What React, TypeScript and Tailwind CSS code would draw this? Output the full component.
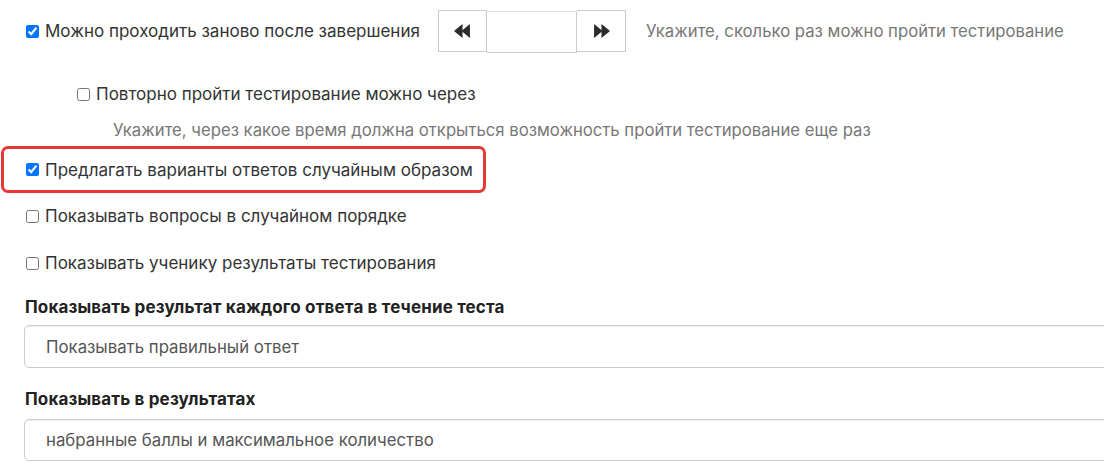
import React from "react";

function Check({ checked = false }: { checked?: boolean }) {
  return (
    <input
      type="checkbox"
      defaultChecked={checked}
      className="w-[13px] h-[13px] m-0 shrink-0"
    />
  );
}

function Backward() {
  return (
    <svg width="17" height="14" viewBox="0 0 16 13" fill="#2b2b2b">
      <path d="M0 6.5 L8 0 L8 13 Z" />
      <path d="M7 6.5 L15 0 L15 13 Z" />
    </svg>
  );
}

function Forward() {
  return (
    <svg width="17" height="14" viewBox="0 0 16 13" fill="#2b2b2b">
      <path d="M1 0 L9 6.5 L1 13 Z" />
      <path d="M8 0 L16 6.5 L8 13 Z" />
    </svg>
  );
}

export default function App() {
  return (
    <div className="w-[1104px] h-[465px] bg-white overflow-hidden font-['Inter',sans-serif] text-[#333] text-[17px] leading-[24px] whitespace-nowrap">
      {/* Row 1 */}
      <div className="flex items-center h-[42px] mt-[10px] pl-[26px]">
        <Check checked />
        <span className="ml-[6px] w-[393px]">Можно проходить заново после завершения</span>
        <div className="flex h-[42px]">
          <div className="w-[49px] h-[42px] border border-[#ccc] flex items-center justify-center bg-white">
            <Backward />
          </div>
          <div className="w-[90px] h-[42px] mt-[1px] border border-l-0 border-[#ccc] border-t-[#e4e4e4] bg-white" />
          <div className="w-[49px] h-[42px] border border-l-0 border-[#ccc] flex items-center justify-center bg-white">
            <Forward />
          </div>
        </div>
        <span className="ml-[20px] text-[#777] text-[16.7px]">Укажите, сколько раз можно пройти тестирование</span>
      </div>

      {/* Row 2 */}
      <div className="flex items-center h-[24px] mt-[30px] pl-[77px]">
        <Check />
        <span className="ml-[6px]">Повторно пройти тестирование можно через</span>
      </div>
      <div className="h-[24px] mt-[12px] pl-[113px] text-[#777] text-[16.7px]">
        Укажите, через какое время должна открыться возможность пройти тестирование еще раз
      </div>

      {/* Highlighted */}
      <div className="mt-[4px] ml-[1px] w-[485px] h-[47px] border-[3px] border-[#e53935] rounded-[7px] flex items-center pl-[22px]">
        <Check checked />
        <span className="ml-[6px]">Предлагать варианты ответов случайным образом</span>
      </div>

      <div className="flex items-center h-[24px] mt-[11px] pl-[26px]">
        <Check />
        <span className="ml-[6px]">Показывать вопросы в случайном порядке</span>
      </div>
      <div className="flex items-center h-[24px] mt-[23px] pl-[26px]">
        <Check />
        <span className="ml-[6px]">Показывать ученику результаты тестирования</span>
      </div>

      <div className="h-[24px] mt-[20px] pl-[25px] font-bold text-[17px] tracking-[0.15px] text-[#222]">
        Показывать результат каждого ответа в течение теста
      </div>
      <div className="mt-[6px] ml-[24px] w-[1100px] h-[43px] border border-[#ccc] rounded-[5px] shadow-[inset_0_1px_1px_rgba(0,0,0,0.075)] flex items-center pl-[21px] text-[#555] text-[16.8px]">
        Показывать правильный ответ
      </div>

      <div className="h-[24px] mt-[19px] pl-[25px] font-bold text-[17px] tracking-[0.15px] text-[#222]">
        Показывать в результатах
      </div>
      <div className="mt-[8px] ml-[24px] w-[1100px] h-[42px] border border-[#ccc] rounded-[5px] shadow-[inset_0_1px_1px_rgba(0,0,0,0.075)] flex items-center pl-[21px] text-[#555] text-[16.8px]">
        набранные баллы и максимальное количество
      </div>
    </div>
  );
}
